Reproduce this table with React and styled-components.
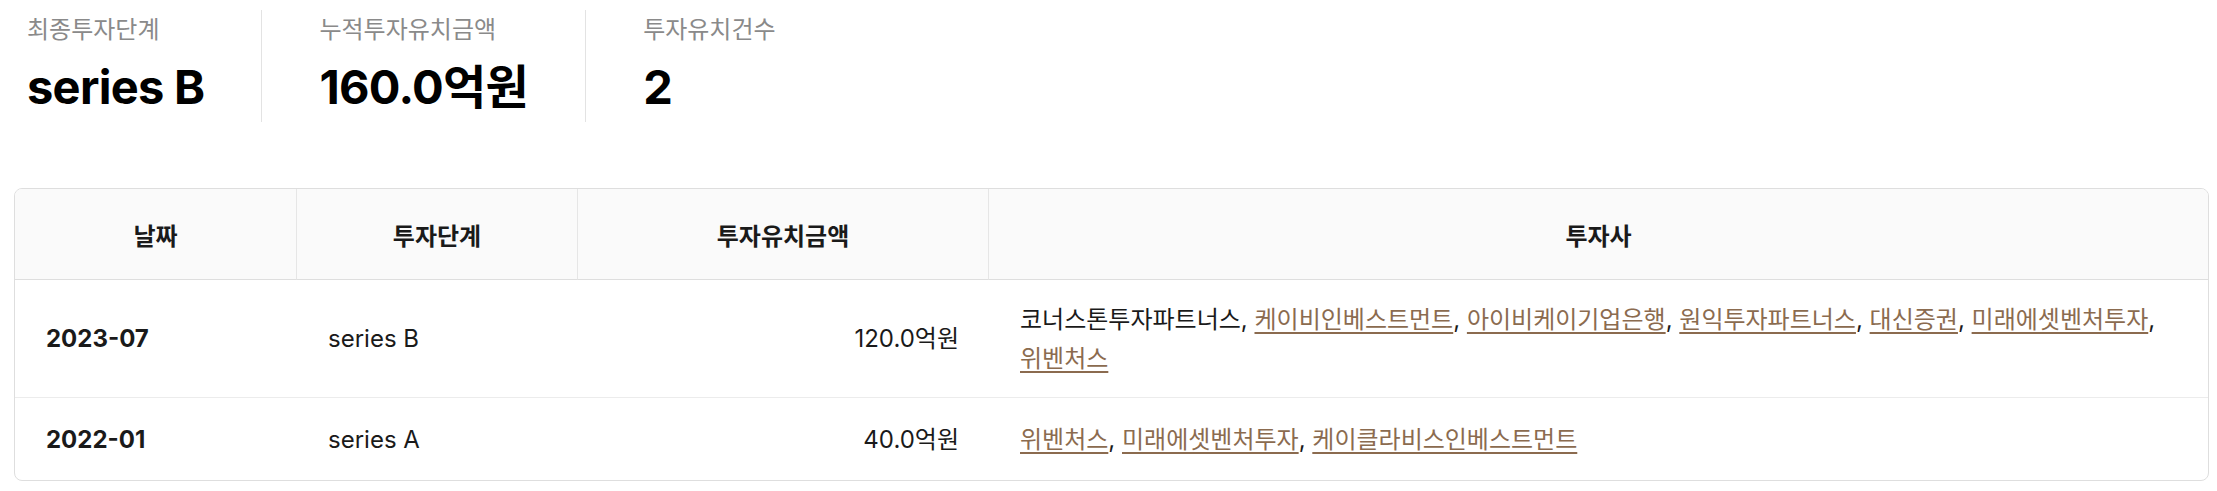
import styled, { createGlobalStyle } from "styled-components";

const GlobalStyle = createGlobalStyle`
  body {
    margin: 0;
    background: #fff;
    font-family: Inter, "Noto Sans CJK KR", sans-serif;
    color: #1a1a1a;
  }
`;

const summary = [
  { label: "최종투자단계", value: "series B" },
  { label: "누적투자유치금액", value: "160.0억원" },
  { label: "투자유치건수", value: "2" },
];

const rounds = [
  {
    date: "2023-07",
    stage: "series B",
    amount: "120.0억원",
    investors: [
      { name: "코너스톤투자파트너스", link: false },
      { name: "케이비인베스트먼트", link: true },
      { name: "아이비케이기업은행", link: true },
      { name: "원익투자파트너스", link: true },
      { name: "대신증권", link: true },
      { name: "미래에셋벤처투자", link: true },
      { name: "위벤처스", link: true },
    ],
  },
  {
    date: "2022-01",
    stage: "series A",
    amount: "40.0억원",
    investors: [
      { name: "위벤처스", link: true },
      { name: "미래에셋벤처투자", link: true },
      { name: "케이클라비스인베스트먼트", link: true },
    ],
  },
];

const App = () => {
  return (
    <Page>
      <GlobalStyle />
      <Summary>
        {summary.map((s, i) => (
          <Stat key={s.label} $first={i === 0}>
            <StatLabel>{s.label}</StatLabel>
            <StatValue>{s.value}</StatValue>
          </Stat>
        ))}
      </Summary>

      <TableWrap>
        <Table>
          <colgroup>
            <col style={{ width: 282 }} />
            <col style={{ width: 281 }} />
            <col style={{ width: 411 }} />
            <col />
          </colgroup>
          <thead>
            <tr>
              <Th>날짜</Th>
              <Th>투자단계</Th>
              <Th>투자유치금액</Th>
              <Th $last>투자사</Th>
            </tr>
          </thead>
          <tbody>
            {rounds.map((r, i) => (
              <Row key={r.date} $last={i === rounds.length - 1}>
                <Td $bold>{r.date}</Td>
                <Td>{r.stage}</Td>
                <Td $align="right">{r.amount}</Td>
                <Td>
                  {r.investors.map((inv, j) => (
                    <span key={inv.name}>
                      {inv.link ? <InvestorLink href="#">{inv.name}</InvestorLink> : inv.name}
                      {j < r.investors.length - 1 && ", "}
                    </span>
                  ))}
                </Td>
              </Row>
            ))}
          </tbody>
        </Table>
      </TableWrap>
    </Page>
  );
};

const Page = styled.div`
  padding: 10px 8px 0 14px;
`;

const Summary = styled.div`
  display: flex;
  align-items: stretch;
`;

const Stat = styled.div`
  display: flex;
  flex-direction: column;
  padding: 4px 57px 8px;
  padding-left: ${({ $first }) => ($first ? "13px" : "57px")};
  border-left: ${({ $first }) => ($first ? "none" : "1px solid #e3e3e3")};
`;

const StatLabel = styled.div`
  font-size: 24px;
  line-height: 32px;
  color: #8a8a8a;
  margin-bottom: 14px;
`;

const StatValue = styled.div`
  font-size: 47px;
  line-height: 54px;
  font-weight: 700;
  color: #000;
  letter-spacing: -0.015em;
`;

const TableWrap = styled.div`
  margin-top: 66px;
  border: 1px solid #dedede;
  border-radius: 8px;
  overflow: hidden;
`;

const Table = styled.table`
  width: 100%;
  table-layout: fixed;
  border-collapse: separate;
  border-spacing: 0;
`;

const Th = styled.th`
  height: 90px;
  padding: 0 20px;
  background: #fafafa;
  font-size: 24px;
  font-weight: 700;
  color: #1a1a1a;
  text-align: center;
  border-bottom: 1px solid #dedede;
  border-right: ${({ $last }) => ($last ? "none" : "1px solid #e6e6e6")};
`;

const Row = styled.tr`
  td {
    border-bottom: ${({ $last }) => ($last ? "none" : "1px solid #ececec")};
  }
`;

const Td = styled.td`
  box-sizing: border-box;
  height: 82px;
  padding: 19.5px 30px 19.5px 31px;
  font-size: 24px;
  line-height: 39px;
  color: #1a1a1a;
  font-weight: ${({ $bold }) => ($bold ? 700 : 400)};
  text-align: ${({ $align }) => $align || "left"};
  vertical-align: middle;
`;

const InvestorLink = styled.a`
  color: #8b6b4f;
  text-decoration: underline;
  text-underline-offset: 4px;
`;

export default App;
